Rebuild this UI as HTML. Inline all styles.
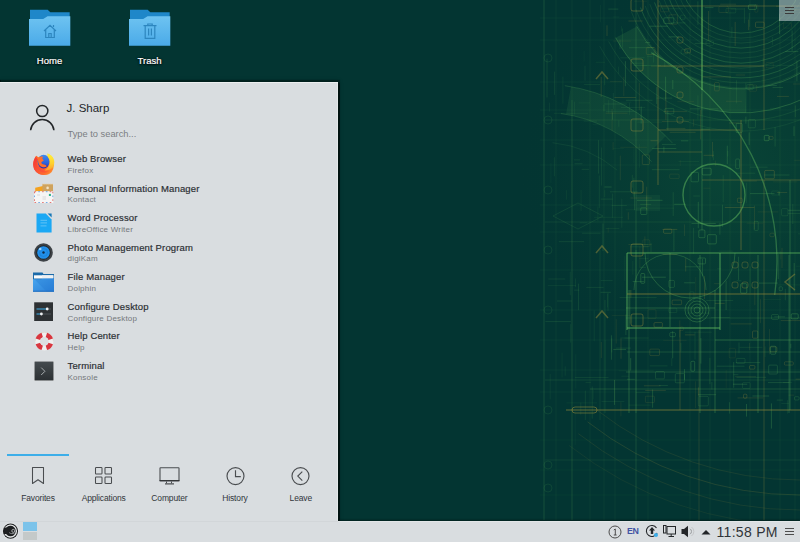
<!DOCTYPE html>
<html><head><meta charset="utf-8">
<style>
*{margin:0;padding:0;box-sizing:border-box}
html,body{width:800px;height:542px;overflow:hidden;background:#033532;font-family:"Liberation Sans",sans-serif}
svg{position:absolute;overflow:visible}
#wall{position:absolute;left:0;top:0;width:800px;height:520px}
.dlabel{position:absolute;color:#fff;-webkit-text-stroke:.2px #fff;font-size:9.5px;line-height:1;text-shadow:0 0 2px #000,0 1px 2px #000;text-align:center;width:80px;white-space:nowrap}
#menu{position:absolute;left:0;top:82px;width:338px;height:439px;background:#d9dde0;box-shadow:0 -.5px 1px 1.5px rgba(0,0,0,.6),0 0 4px 1px rgba(0,0,0,.25),inset 0 1px 0 #eceeef,inset -1px 0 0 #e4e7e9}
.t{position:absolute;white-space:nowrap;line-height:1}
.title{font-size:9.5px;letter-spacing:.15px;color:#2a2e32;-webkit-text-stroke:.18px #2a2e32}
.sub{font-size:8px;letter-spacing:.2px;color:#73777a}
.tab{position:absolute;top:0;width:66px;text-align:center;font-size:8.5px;letter-spacing:-.15px;color:#31363b}
#taskbar{position:absolute;left:0;top:521px;width:800px;height:21px;background:#d9dde0;border-top:1px solid #e3e6e8}
#tbshadow{position:absolute;left:339px;top:521px;width:461px;height:1px;box-shadow:0 -1px 2px 0 rgba(0,0,0,.6)}
</style></head><body>
<svg id="wall" width="800" height="520" viewBox="0 0 800 520">
  <defs>
    <radialGradient id="glow" cx="725" cy="170" r="210" gradientUnits="userSpaceOnUse">
      <stop offset="0" stop-color="#1a6a40" stop-opacity=".3"/>
      <stop offset=".6" stop-color="#125438" stop-opacity=".16"/>
      <stop offset="1" stop-color="#023430" stop-opacity="0"/>
    </radialGradient>
  </defs>
  <rect width="800" height="520" fill="#033532"/>
  <rect width="800" height="520" fill="url(#glow)"/>
  <g fill="none">
<path d="M746.0 112.9A142 142 0 0 1 615.6 37.7L636.8 26.4A118 118 0 0 0 745.1 88.9Z" fill="#62bb5e" fill-opacity="0.12"/>
<path d="M803.0 -29.0A62 62 0 0 1 682.7 -7.8" fill="none" stroke="#62bb5e" stroke-opacity="0.24" stroke-width="1"/>
<path d="M808.0 -29.0A67 67 0 0 1 678.0 -6.1" fill="none" stroke="#62bb5e" stroke-opacity="0.13" stroke-width="1"/>
<path d="M813.0 -29.0A72 72 0 0 1 673.3 -4.4" fill="none" stroke="#62bb5e" stroke-opacity="0.13" stroke-width="1"/>
<path d="M818.0 -29.0A77 77 0 0 1 668.6 -2.7" fill="none" stroke="#62bb5e" stroke-opacity="0.24" stroke-width="1"/>
<path d="M823.0 -29.0A82 82 0 0 1 663.9 -1.0" fill="none" stroke="#62bb5e" stroke-opacity="0.13" stroke-width="1"/>
<path d="M828.0 -29.0A87 87 0 0 1 659.2 0.8" fill="none" stroke="#62bb5e" stroke-opacity="0.13" stroke-width="1"/>
<path d="M833.0 -29.0A92 92 0 0 1 654.5 2.5" fill="none" stroke="#62bb5e" stroke-opacity="0.24" stroke-width="1"/>
<path d="M838.0 -29.0A97 97 0 0 1 649.8 4.2" fill="none" stroke="#62bb5e" stroke-opacity="0.13" stroke-width="1"/>
<path d="M843.0 -29.0A102 102 0 0 1 645.2 5.9" fill="none" stroke="#62bb5e" stroke-opacity="0.13" stroke-width="1"/>
<path d="M848.0 -29.0A107 107 0 0 1 640.5 7.6" fill="none" stroke="#62bb5e" stroke-opacity="0.24" stroke-width="1"/>
<path d="M853.0 -29.0A112 112 0 0 1 635.8 9.3" fill="none" stroke="#62bb5e" stroke-opacity="0.13" stroke-width="1"/>
<path d="M858.0 -29.0A117 117 0 0 1 631.1 11.0" fill="none" stroke="#62bb5e" stroke-opacity="0.13" stroke-width="1"/>
<path d="M851.9 11.4A118 118 0 0 1 636.8 26.4" fill="none" stroke="#62bb5e" stroke-opacity="0.3" stroke-width="1"/>
<path d="M874.4 19.6A142 142 0 0 1 615.6 37.7" fill="none" stroke="#62bb5e" stroke-opacity="0.3" stroke-width="1"/>
<path d="M882.0 22.3A150 150 0 0 1 608.6 41.4" fill="none" stroke="#62bb5e" stroke-opacity="0.12" stroke-width="1"/>
<path d="M891.4 25.7A160 160 0 0 1 599.7 46.1" fill="none" stroke="#62bb5e" stroke-opacity="0.1" stroke-width="1"/>
<path d="M570.9 86.7A178 178 0 0 1 665.9 136.1L646.1 155.9A150 150 0 0 0 566.0 114.3Z" fill="#62bb5e" fill-opacity="0.1"/>
<path d="M560.9 113.5A150 150 0 0 1 651.5 161.6" fill="none" stroke="#62bb5e" stroke-opacity="0.2" stroke-width="1"/>
<path d="M564.8 85.7A178 178 0 0 1 672.3 142.9" fill="none" stroke="#62bb5e" stroke-opacity="0.2" stroke-width="1"/>
<path d="M552.5 142.7A120 120 0 0 1 617.1 170.1" fill="none" stroke="#62bb5e" stroke-opacity="0.1" stroke-width="1"/>
<path d="M664.8 61.1L664.8 67.0" stroke="#62bb5e" stroke-opacity="0.14" stroke-width="1"/>
<path d="M611.6 205.5L626.9 205.5" stroke="#62bb5e" stroke-opacity="0.1" stroke-width="1"/>
<path d="M684.9 334.9L694.7 334.9" stroke="#948a3a" stroke-opacity="0.24" stroke-width="1"/>
<path d="M715.4 160.7L715.4 165.9" stroke="#948a3a" stroke-opacity="0.13" stroke-width="1"/>
<path d="M628.9 47.7L654.1 47.7" stroke="#62bb5e" stroke-opacity="0.18" stroke-width="1"/>
<path d="M727.8 150.8L727.8 156.5" stroke="#62bb5e" stroke-opacity="0.12" stroke-width="1"/>
<path d="M736.1 173.2L755.3 173.2" stroke="#62bb5e" stroke-opacity="0.13" stroke-width="1"/>
<path d="M758.9 283.1L777.8 283.1" stroke="#62bb5e" stroke-opacity="0.23" stroke-width="1"/>
<path d="M745.9 116.6L745.9 123.7" stroke="#62bb5e" stroke-opacity="0.21" stroke-width="1"/>
<path d="M630.4 198.0L651.8 198.0" stroke="#948a3a" stroke-opacity="0.18" stroke-width="1"/>
<path d="M775.1 127.1L775.1 146.5" stroke="#62bb5e" stroke-opacity="0.16" stroke-width="1"/>
<path d="M768.0 382.6L789.3 382.6" stroke="#62bb5e" stroke-opacity="0.2" stroke-width="1"/>
<path d="M729.4 402.2L729.4 413.6" stroke="#62bb5e" stroke-opacity="0.19" stroke-width="1"/>
<path d="M604.5 187.0L611.6 187.0" stroke="#62bb5e" stroke-opacity="0.21" stroke-width="1"/>
<path d="M625.9 100.3L652.5 100.3" stroke="#62bb5e" stroke-opacity="0.16" stroke-width="1"/>
<path d="M709.9 357.8L709.9 384.2" stroke="#62bb5e" stroke-opacity="0.15" stroke-width="1"/>
<path d="M671.8 358.1L671.8 366.0" stroke="#62bb5e" stroke-opacity="0.12" stroke-width="1"/>
<path d="M646.7 196.4L646.7 207.2" stroke="#62bb5e" stroke-opacity="0.15" stroke-width="1"/>
<path d="M673.9 229.4L673.9 251.3" stroke="#62bb5e" stroke-opacity="0.18" stroke-width="1"/>
<path d="M735.2 21.9L735.2 46.1" stroke="#948a3a" stroke-opacity="0.22" stroke-width="1"/>
<path d="M678.5 161.6L699.0 161.6" stroke="#62bb5e" stroke-opacity="0.09" stroke-width="1"/>
<path d="M641.8 65.7L647.1 65.7" stroke="#62bb5e" stroke-opacity="0.11" stroke-width="1"/>
<path d="M620.3 147.3L647.0 147.3" stroke="#948a3a" stroke-opacity="0.11" stroke-width="1"/>
<path d="M650.5 140.7L657.6 140.7" stroke="#948a3a" stroke-opacity="0.25" stroke-width="1"/>
<path d="M693.2 196.0L699.9 196.0" stroke="#62bb5e" stroke-opacity="0.13" stroke-width="1"/>
<path d="M765.8 65.4L794.5 65.4" stroke="#62bb5e" stroke-opacity="0.1" stroke-width="1"/>
<path d="M708.6 11.0L708.6 40.4" stroke="#948a3a" stroke-opacity="0.2" stroke-width="1"/>
<path d="M652.2 148.5L676.3 148.5" stroke="#62bb5e" stroke-opacity="0.21" stroke-width="1"/>
<path d="M665.9 90.3L665.9 119.9" stroke="#948a3a" stroke-opacity="0.22" stroke-width="1"/>
<path d="M763.7 299.6L781.1 299.6" stroke="#62bb5e" stroke-opacity="0.08" stroke-width="1"/>
<path d="M605.6 113.2L627.6 113.2" stroke="#948a3a" stroke-opacity="0.16" stroke-width="1"/>
<path d="M787.4 400.2L787.4 413.6" stroke="#62bb5e" stroke-opacity="0.12" stroke-width="1"/>
<path d="M639.3 82.8L639.3 110.2" stroke="#948a3a" stroke-opacity="0.16" stroke-width="1"/>
<path d="M730.6 323.9L751.8 323.9" stroke="#948a3a" stroke-opacity="0.21" stroke-width="1"/>
<path d="M750.0 193.6L774.5 193.6" stroke="#62bb5e" stroke-opacity="0.22" stroke-width="1"/>
<path d="M794.3 160.3L822.9 160.3" stroke="#948a3a" stroke-opacity="0.11" stroke-width="1"/>
<path d="M625.4 61.2L625.4 86.2" stroke="#62bb5e" stroke-opacity="0.22" stroke-width="1"/>
<path d="M796.1 266.2L814.3 266.2" stroke="#62bb5e" stroke-opacity="0.08" stroke-width="1"/>
<path d="M794.2 263.1L794.2 291.4" stroke="#62bb5e" stroke-opacity="0.23" stroke-width="1"/>
<path d="M765.2 85.5L776.8 85.5" stroke="#62bb5e" stroke-opacity="0.18" stroke-width="1"/>
<path d="M651.9 169.7L679.5 169.7" stroke="#62bb5e" stroke-opacity="0.16" stroke-width="1"/>
<path d="M716.7 366.2L744.5 366.2" stroke="#62bb5e" stroke-opacity="0.17" stroke-width="1"/>
<path d="M704.7 7.6L713.5 7.6" stroke="#62bb5e" stroke-opacity="0.22" stroke-width="1"/>
<path d="M634.5 191.8L634.5 210.2" stroke="#62bb5e" stroke-opacity="0.17" stroke-width="1"/>
<path d="M711.1 317.6L729.7 317.6" stroke="#62bb5e" stroke-opacity="0.13" stroke-width="1"/>
<path d="M754.5 205.6L754.5 229.4" stroke="#948a3a" stroke-opacity="0.16" stroke-width="1"/>
<path d="M722.5 204.7L722.5 226.8" stroke="#62bb5e" stroke-opacity="0.17" stroke-width="1"/>
<path d="M695.6 381.3L695.6 408.1" stroke="#948a3a" stroke-opacity="0.12" stroke-width="1"/>
<path d="M711.9 382.0L711.9 389.6" stroke="#62bb5e" stroke-opacity="0.16" stroke-width="1"/>
<path d="M614.5 97.5L635.9 97.5" stroke="#948a3a" stroke-opacity="0.23" stroke-width="1"/>
<path d="M630.9 290.0L630.9 297.7" stroke="#948a3a" stroke-opacity="0.24" stroke-width="1"/>
<path d="M643.9 385.8L660.6 385.8" stroke="#948a3a" stroke-opacity="0.22" stroke-width="1"/>
<path d="M632.3 174.8L632.3 187.6" stroke="#62bb5e" stroke-opacity="0.13" stroke-width="1"/>
<path d="M744.4 7.9L744.4 23.3" stroke="#62bb5e" stroke-opacity="0.14" stroke-width="1"/>
<path d="M724.8 207.5L754.4 207.5" stroke="#948a3a" stroke-opacity="0.25" stroke-width="1"/>
<path d="M621.0 107.6L645.2 107.6" stroke="#62bb5e" stroke-opacity="0.1" stroke-width="1"/>
<path d="M684.5 369.1L684.5 379.8" stroke="#62bb5e" stroke-opacity="0.24" stroke-width="1"/>
<path d="M714.1 283.7L719.6 283.7" stroke="#948a3a" stroke-opacity="0.15" stroke-width="1"/>
<path d="M614.5 380.0L614.5 404.9" stroke="#62bb5e" stroke-opacity="0.23" stroke-width="1"/>
<path d="M613.3 349.4L626.1 349.4" stroke="#62bb5e" stroke-opacity="0.24" stroke-width="1"/>
<path d="M653.6 52.3L653.6 62.5" stroke="#62bb5e" stroke-opacity="0.11" stroke-width="1"/>
<path d="M610.1 81.7L622.0 81.7" stroke="#948a3a" stroke-opacity="0.13" stroke-width="1"/>
<path d="M700.0 72.0L704.5 72.0" stroke="#62bb5e" stroke-opacity="0.08" stroke-width="1"/>
<path d="M746.6 223.2L763.0 223.2" stroke="#948a3a" stroke-opacity="0.1" stroke-width="1"/>
<path d="M763.8 175.0L789.5 175.0" stroke="#62bb5e" stroke-opacity="0.17" stroke-width="1"/>
<path d="M737.5 397.9L763.2 397.9" stroke="#948a3a" stroke-opacity="0.19" stroke-width="1"/>
<path d="M680.9 140.8L688.3 140.8" stroke="#62bb5e" stroke-opacity="0.21" stroke-width="1"/>
<path d="M651.1 66.1L677.0 66.1" stroke="#948a3a" stroke-opacity="0.19" stroke-width="1"/>
<path d="M656.4 98.1L672.3 98.1" stroke="#62bb5e" stroke-opacity="0.16" stroke-width="1"/>
<path d="M652.6 389.5L652.6 407.7" stroke="#62bb5e" stroke-opacity="0.24" stroke-width="1"/>
<path d="M661.9 144.4L675.8 144.4" stroke="#62bb5e" stroke-opacity="0.17" stroke-width="1"/>
<path d="M640.2 204.4L651.1 204.4" stroke="#62bb5e" stroke-opacity="0.15" stroke-width="1"/>
<path d="M608.3 9.1L618.4 9.1" stroke="#62bb5e" stroke-opacity="0.17" stroke-width="1"/>
<path d="M750.1 266.3L750.1 293.2" stroke="#62bb5e" stroke-opacity="0.14" stroke-width="1"/>
<path d="M796.9 60.5L796.9 81.3" stroke="#62bb5e" stroke-opacity="0.22" stroke-width="1"/>
<path d="M778.4 254.1L778.4 279.2" stroke="#62bb5e" stroke-opacity="0.17" stroke-width="1"/>
<path d="M700.9 338.1L700.9 363.6" stroke="#62bb5e" stroke-opacity="0.23" stroke-width="1"/>
<path d="M736.6 280.8L741.4 280.8" stroke="#62bb5e" stroke-opacity="0.14" stroke-width="1"/>
<path d="M621.0 338.5L621.0 358.8" stroke="#948a3a" stroke-opacity="0.2" stroke-width="1"/>
<path d="M697.9 1.3L697.9 24.8" stroke="#62bb5e" stroke-opacity="0.17" stroke-width="1"/>
<path d="M731.9 26.8L731.9 37.3" stroke="#62bb5e" stroke-opacity="0.13" stroke-width="1"/>
<path d="M745.9 83.1L745.9 112.5" stroke="#62bb5e" stroke-opacity="0.15" stroke-width="1"/>
<path d="M695.8 276.9L695.8 296.9" stroke="#948a3a" stroke-opacity="0.09" stroke-width="1"/>
<path d="M629.5 102.8L629.5 114.8" stroke="#62bb5e" stroke-opacity="0.08" stroke-width="1"/>
<path d="M612.1 108.9L612.1 130.8" stroke="#948a3a" stroke-opacity="0.13" stroke-width="1"/>
<path d="M703.3 188.2L710.4 188.2" stroke="#948a3a" stroke-opacity="0.11" stroke-width="1"/>
<path d="M795.6 379.2L811.6 379.2" stroke="#948a3a" stroke-opacity="0.24" stroke-width="1"/>
<path d="M689.9 108.8L718.5 108.8" stroke="#62bb5e" stroke-opacity="0.18" stroke-width="1"/>
<path d="M628.3 212.2L628.3 219.7" stroke="#948a3a" stroke-opacity="0.17" stroke-width="1"/>
<path d="M777.4 284.9L804.7 284.9" stroke="#62bb5e" stroke-opacity="0.08" stroke-width="1"/>
<path d="M600.7 199.1L612.6 199.1" stroke="#62bb5e" stroke-opacity="0.14" stroke-width="1"/>
<path d="M663.2 340.3L686.7 340.3" stroke="#948a3a" stroke-opacity="0.1" stroke-width="1"/>
<path d="M785.3 288.8L785.3 300.3" stroke="#62bb5e" stroke-opacity="0.15" stroke-width="1"/>
<path d="M799.8 238.6L814.9 238.6" stroke="#62bb5e" stroke-opacity="0.09" stroke-width="1"/>
<path d="M620.3 338.0L648.7 338.0" stroke="#62bb5e" stroke-opacity="0.13" stroke-width="1"/>
<path d="M702.2 76.9L731.1 76.9" stroke="#948a3a" stroke-opacity="0.22" stroke-width="1"/>
<path d="M726.2 369.9L726.2 388.2" stroke="#948a3a" stroke-opacity="0.09" stroke-width="1"/>
<path d="M746.5 182.6L746.5 203.4" stroke="#62bb5e" stroke-opacity="0.09" stroke-width="1"/>
<path d="M785.4 51.6L798.3 51.6" stroke="#62bb5e" stroke-opacity="0.21" stroke-width="1"/>
<path d="M795.3 105.4L795.3 117.2" stroke="#62bb5e" stroke-opacity="0.15" stroke-width="1"/>
<path d="M633.5 65.5L661.0 65.5" stroke="#62bb5e" stroke-opacity="0.12" stroke-width="1"/>
<path d="M781.3 403.6L788.9 403.6" stroke="#62bb5e" stroke-opacity="0.1" stroke-width="1"/>
<path d="M668.4 36.9L679.1 36.9" stroke="#62bb5e" stroke-opacity="0.23" stroke-width="1"/>
<path d="M749.9 167.2L767.6 167.2" stroke="#62bb5e" stroke-opacity="0.14" stroke-width="1"/>
<path d="M612.4 112.4L612.4 119.7" stroke="#62bb5e" stroke-opacity="0.19" stroke-width="1"/>
<path d="M772.6 87.5L783.0 87.5" stroke="#62bb5e" stroke-opacity="0.16" stroke-width="1"/>
<path d="M790.8 343.7L790.8 348.3" stroke="#62bb5e" stroke-opacity="0.2" stroke-width="1"/>
<path d="M779.1 191.7L779.1 195.7" stroke="#62bb5e" stroke-opacity="0.24" stroke-width="1"/>
<path d="M765.1 346.5L765.1 356.9" stroke="#62bb5e" stroke-opacity="0.11" stroke-width="1"/>
<path d="M704.5 276.2L704.5 299.0" stroke="#948a3a" stroke-opacity="0.21" stroke-width="1"/>
<path d="M691.5 223.4L715.8 223.4" stroke="#62bb5e" stroke-opacity="0.24" stroke-width="1"/>
<path d="M729.1 123.0L739.6 123.0" stroke="#948a3a" stroke-opacity="0.2" stroke-width="1"/>
<path d="M622.4 28.5L622.4 47.6" stroke="#62bb5e" stroke-opacity="0.12" stroke-width="1"/>
<path d="M720.2 4.2L736.2 4.2" stroke="#948a3a" stroke-opacity="0.19" stroke-width="1"/>
<path d="M776.8 192.5L787.2 192.5" stroke="#948a3a" stroke-opacity="0.2" stroke-width="1"/>
<path d="M661.5 8.8L683.0 8.8" stroke="#62bb5e" stroke-opacity="0.12" stroke-width="1"/>
<path d="M733.5 374.7L738.4 374.7" stroke="#62bb5e" stroke-opacity="0.15" stroke-width="1"/>
<path d="M736.5 80.2L736.5 103.4" stroke="#62bb5e" stroke-opacity="0.11" stroke-width="1"/>
<path d="M794.0 126.2L794.0 136.2" stroke="#62bb5e" stroke-opacity="0.21" stroke-width="1"/>
<path d="M659.0 385.5L667.9 385.5" stroke="#62bb5e" stroke-opacity="0.15" stroke-width="1"/>
<path d="M733.1 384.2L747.3 384.2" stroke="#62bb5e" stroke-opacity="0.25" stroke-width="1"/>
<path d="M628.4 21.0L642.6 21.0" stroke="#948a3a" stroke-opacity="0.23" stroke-width="1"/>
<path d="M746.5 404.0L746.5 416.6" stroke="#62bb5e" stroke-opacity="0.24" stroke-width="1"/>
<path d="M749.3 12.9L749.3 26.8" stroke="#62bb5e" stroke-opacity="0.14" stroke-width="1"/>
<path d="M633.9 1.2L647.0 1.2" stroke="#948a3a" stroke-opacity="0.1" stroke-width="1"/>
<path d="M792.9 84.0L818.2 84.0" stroke="#948a3a" stroke-opacity="0.15" stroke-width="1"/>
<path d="M609.9 191.8L637.8 191.8" stroke="#62bb5e" stroke-opacity="0.14" stroke-width="1"/>
<path d="M779.4 12.3L804.5 12.3" stroke="#948a3a" stroke-opacity="0.09" stroke-width="1"/>
<path d="M607.0 25.3L607.0 36.0" stroke="#948a3a" stroke-opacity="0.23" stroke-width="1"/>
<path d="M667.8 110.3L667.8 130.3" stroke="#62bb5e" stroke-opacity="0.2" stroke-width="1"/>
<path d="M663.3 111.6L686.9 111.6" stroke="#948a3a" stroke-opacity="0.19" stroke-width="1"/>
<path d="M788.7 9.8L805.0 9.8" stroke="#948a3a" stroke-opacity="0.24" stroke-width="1"/>
<path d="M677.3 101.7L694.1 101.7" stroke="#948a3a" stroke-opacity="0.11" stroke-width="1"/>
<path d="M760.5 299.1L760.5 323.2" stroke="#948a3a" stroke-opacity="0.14" stroke-width="1"/>
<path d="M663.9 146.6L663.9 152.6" stroke="#62bb5e" stroke-opacity="0.21" stroke-width="1"/>
<path d="M649.5 26.2L667.8 26.2" stroke="#62bb5e" stroke-opacity="0.25" stroke-width="1"/>
<path d="M776.7 400.1L782.9 400.1" stroke="#62bb5e" stroke-opacity="0.16" stroke-width="1"/>
<path d="M742.0 181.0L756.8 181.0" stroke="#948a3a" stroke-opacity="0.19" stroke-width="1"/>
<path d="M749.6 343.0L749.6 350.2" stroke="#948a3a" stroke-opacity="0.13" stroke-width="1"/>
<path d="M713.4 151.1L713.4 160.2" stroke="#62bb5e" stroke-opacity="0.12" stroke-width="1"/>
<path d="M630.7 358.1L630.7 370.6" stroke="#62bb5e" stroke-opacity="0.25" stroke-width="1"/>
<path d="M701.5 93.7L701.5 114.7" stroke="#948a3a" stroke-opacity="0.1" stroke-width="1"/>
<path d="M695.0 331.7L695.0 359.5" stroke="#62bb5e" stroke-opacity="0.13" stroke-width="1"/>
<path d="M623.8 76.8L623.8 95.9" stroke="#948a3a" stroke-opacity="0.14" stroke-width="1"/>
<path d="M773.2 181.9L797.4 181.9" stroke="#948a3a" stroke-opacity="0.1" stroke-width="1"/>
<path d="M719.2 251.1L732.8 251.1" stroke="#62bb5e" stroke-opacity="0.11" stroke-width="1"/>
<path d="M651.0 242.8L651.0 252.1" stroke="#62bb5e" stroke-opacity="0.14" stroke-width="1"/>
<path d="M735.7 75.0L745.0 75.0" stroke="#948a3a" stroke-opacity="0.17" stroke-width="1"/>
<path d="M612.7 41.1L631.0 41.1" stroke="#948a3a" stroke-opacity="0.1" stroke-width="1"/>
<path d="M632.7 281.6L644.1 281.6" stroke="#62bb5e" stroke-opacity="0.24" stroke-width="1"/>
<path d="M662.5 229.4L677.3 229.4" stroke="#948a3a" stroke-opacity="0.25" stroke-width="1"/>
<path d="M672.8 79.9L672.8 89.2" stroke="#62bb5e" stroke-opacity="0.23" stroke-width="1"/>
<path d="M684.8 332.2L711.7 332.2" stroke="#62bb5e" stroke-opacity="0.11" stroke-width="1"/>
<path d="M603.0 223.4L603.0 251.0" stroke="#62bb5e" stroke-opacity="0.19" stroke-width="1"/>
<path d="M674.2 204.3L685.5 204.3" stroke="#62bb5e" stroke-opacity="0.24" stroke-width="1"/>
<path d="M621.8 198.7L621.8 227.8" stroke="#62bb5e" stroke-opacity="0.1" stroke-width="1"/>
<path d="M788.6 395.1L794.0 395.1" stroke="#948a3a" stroke-opacity="0.15" stroke-width="1"/>
<path d="M780.8 251.2L780.8 259.4" stroke="#948a3a" stroke-opacity="0.12" stroke-width="1"/>
<path d="M680.9 342.8L680.9 351.5" stroke="#62bb5e" stroke-opacity="0.15" stroke-width="1"/>
<path d="M703.6 155.3L714.0 155.3" stroke="#948a3a" stroke-opacity="0.23" stroke-width="1"/>
<path d="M608.2 227.7L608.2 232.7" stroke="#948a3a" stroke-opacity="0.1" stroke-width="1"/>
<path d="M719.9 222.8L719.9 234.7" stroke="#62bb5e" stroke-opacity="0.18" stroke-width="1"/>
<path d="M685.1 266.8L700.5 266.8" stroke="#62bb5e" stroke-opacity="0.19" stroke-width="1"/>
<path d="M697.9 95.3L697.9 119.6" stroke="#62bb5e" stroke-opacity="0.11" stroke-width="1"/>
<path d="M694.6 43.4L709.8 43.4" stroke="#62bb5e" stroke-opacity="0.16" stroke-width="1"/>
<path d="M702.0 16.5L702.0 22.6" stroke="#948a3a" stroke-opacity="0.21" stroke-width="1"/>
<path d="M702.3 22.0L702.3 35.8" stroke="#948a3a" stroke-opacity="0.1" stroke-width="1"/>
<path d="M771.4 403.4L771.4 428.6" stroke="#62bb5e" stroke-opacity="0.25" stroke-width="1"/>
<path d="M698.4 387.4L698.4 395.7" stroke="#948a3a" stroke-opacity="0.24" stroke-width="1"/>
<path d="M613.1 142.1L613.1 150.2" stroke="#948a3a" stroke-opacity="0.13" stroke-width="1"/>
<path d="M763.1 58.1L763.1 86.1" stroke="#62bb5e" stroke-opacity="0.12" stroke-width="1"/>
<path d="M701.2 129.2L709.9 129.2" stroke="#62bb5e" stroke-opacity="0.24" stroke-width="1"/>
<path d="M735.9 362.6L760.3 362.6" stroke="#62bb5e" stroke-opacity="0.17" stroke-width="1"/>
<path d="M727.3 145.7L727.3 164.1" stroke="#62bb5e" stroke-opacity="0.23" stroke-width="1"/>
<path d="M620.9 402.1L620.9 416.4" stroke="#948a3a" stroke-opacity="0.13" stroke-width="1"/>
<path d="M798.1 233.8L822.0 233.8" stroke="#62bb5e" stroke-opacity="0.11" stroke-width="1"/>
<path d="M748.7 19.6L748.7 30.2" stroke="#948a3a" stroke-opacity="0.25" stroke-width="1"/>
<path d="M717.2 268.8L721.2 268.8" stroke="#62bb5e" stroke-opacity="0.11" stroke-width="1"/>
<path d="M723.2 175.1L723.2 202.3" stroke="#62bb5e" stroke-opacity="0.12" stroke-width="1"/>
<path d="M730.6 9.0L743.9 9.0" stroke="#62bb5e" stroke-opacity="0.14" stroke-width="1"/>
<path d="M644.9 236.4L644.9 245.7" stroke="#948a3a" stroke-opacity="0.16" stroke-width="1"/>
<path d="M626.9 379.3L634.8 379.3" stroke="#62bb5e" stroke-opacity="0.19" stroke-width="1"/>
<path d="M774.3 316.8L785.1 316.8" stroke="#62bb5e" stroke-opacity="0.19" stroke-width="1"/>
<path d="M712.5 141.9L712.5 157.4" stroke="#948a3a" stroke-opacity="0.2" stroke-width="1"/>
<path d="M649.7 365.9L667.5 365.9" stroke="#62bb5e" stroke-opacity="0.12" stroke-width="1"/>
<path d="M611.7 315.4L630.0 315.4" stroke="#948a3a" stroke-opacity="0.1" stroke-width="1"/>
<path d="M639.9 246.3L639.9 267.0" stroke="#948a3a" stroke-opacity="0.11" stroke-width="1"/>
<path d="M661.9 121.6L689.0 121.6" stroke="#948a3a" stroke-opacity="0.2" stroke-width="1"/>
<path d="M601.3 342.0L601.3 358.1" stroke="#948a3a" stroke-opacity="0.16" stroke-width="1"/>
<path d="M645.2 42.6L650.2 42.6" stroke="#62bb5e" stroke-opacity="0.21" stroke-width="1"/>
<path d="M739.0 342.4L739.0 353.3" stroke="#62bb5e" stroke-opacity="0.15" stroke-width="1"/>
<path d="M757.7 211.9L778.4 211.9" stroke="#948a3a" stroke-opacity="0.12" stroke-width="1"/>
<path d="M776.0 6.2L786.1 6.2" stroke="#948a3a" stroke-opacity="0.24" stroke-width="1"/>
<path d="M749.2 132.4L749.2 144.9" stroke="#62bb5e" stroke-opacity="0.23" stroke-width="1"/>
<path d="M726.1 280.6L726.1 310.1" stroke="#62bb5e" stroke-opacity="0.22" stroke-width="1"/>
<path d="M739.5 347.3L762.4 347.3" stroke="#62bb5e" stroke-opacity="0.13" stroke-width="1"/>
<path d="M642.4 252.2L670.1 252.2" stroke="#62bb5e" stroke-opacity="0.08" stroke-width="1"/>
<path d="M621.3 376.2L629.0 376.2" stroke="#62bb5e" stroke-opacity="0.09" stroke-width="1"/>
<path d="M738.5 256.7L738.5 279.9" stroke="#62bb5e" stroke-opacity="0.18" stroke-width="1"/>
<path d="M672.7 331.1L672.7 358.3" stroke="#62bb5e" stroke-opacity="0.23" stroke-width="1"/>
<path d="M782.9 382.5L792.2 382.5" stroke="#62bb5e" stroke-opacity="0.09" stroke-width="1"/>
<path d="M769.5 328.9L769.5 354.3" stroke="#948a3a" stroke-opacity="0.13" stroke-width="1"/>
<path d="M620.0 39.6L620.0 49.0" stroke="#62bb5e" stroke-opacity="0.15" stroke-width="1"/>
<path d="M604.2 104.0L626.8 104.0" stroke="#62bb5e" stroke-opacity="0.13" stroke-width="1"/>
<path d="M792.8 204.0L792.8 224.1" stroke="#62bb5e" stroke-opacity="0.15" stroke-width="1"/>
<path d="M687.3 313.1L709.6 313.1" stroke="#62bb5e" stroke-opacity="0.12" stroke-width="1"/>
<path d="M772.4 36.8L772.4 45.2" stroke="#62bb5e" stroke-opacity="0.11" stroke-width="1"/>
<path d="M752.4 396.0L769.2 396.0" stroke="#62bb5e" stroke-opacity="0.22" stroke-width="1"/>
<path d="M636.9 200.3L662.5 200.3" stroke="#62bb5e" stroke-opacity="0.24" stroke-width="1"/>
<path d="M656.7 87.0L656.7 103.9" stroke="#62bb5e" stroke-opacity="0.19" stroke-width="1"/>
<path d="M616.2 319.1L616.2 343.6" stroke="#948a3a" stroke-opacity="0.14" stroke-width="1"/>
<path d="M680.3 159.8L680.3 166.1" stroke="#948a3a" stroke-opacity="0.08" stroke-width="1"/>
<path d="M641.2 106.6L641.2 123.6" stroke="#62bb5e" stroke-opacity="0.23" stroke-width="1"/>
<path d="M646.7 186.7L646.7 210.3" stroke="#948a3a" stroke-opacity="0.19" stroke-width="1"/>
<path d="M669.7 132.3L695.6 132.3" stroke="#948a3a" stroke-opacity="0.21" stroke-width="1"/>
<path d="M633.9 177.7L633.9 196.8" stroke="#62bb5e" stroke-opacity="0.16" stroke-width="1"/>
<path d="M777.0 96.4L788.9 96.4" stroke="#948a3a" stroke-opacity="0.22" stroke-width="1"/>
<path d="M630.9 63.2L643.4 63.2" stroke="#62bb5e" stroke-opacity="0.11" stroke-width="1"/>
<path d="M665.6 76.7L665.6 99.6" stroke="#62bb5e" stroke-opacity="0.24" stroke-width="1"/>
<path d="M620.3 155.6L620.3 180.3" stroke="#948a3a" stroke-opacity="0.15" stroke-width="1"/>
<path d="M639.2 258.4L648.6 258.4" stroke="#62bb5e" stroke-opacity="0.09" stroke-width="1"/>
<path d="M679.8 320.4L679.8 337.4" stroke="#948a3a" stroke-opacity="0.16" stroke-width="1"/>
<path d="M628.4 244.5L651.6 244.5" stroke="#948a3a" stroke-opacity="0.15" stroke-width="1"/>
<path d="M714.8 303.4L724.7 303.4" stroke="#948a3a" stroke-opacity="0.23" stroke-width="1"/>
<path d="M754.8 283.5L754.8 305.2" stroke="#948a3a" stroke-opacity="0.16" stroke-width="1"/>
<path d="M662.6 254.5L677.5 254.5" stroke="#948a3a" stroke-opacity="0.2" stroke-width="1"/>
<path d="M725.9 101.3L741.8 101.3" stroke="#948a3a" stroke-opacity="0.15" stroke-width="1"/>
<path d="M735.0 376.7L756.1 376.7" stroke="#948a3a" stroke-opacity="0.15" stroke-width="1"/>
<path d="M698.0 394.7L716.1 394.7" stroke="#62bb5e" stroke-opacity="0.21" stroke-width="1"/>
<path d="M788.1 210.3L807.1 210.3" stroke="#62bb5e" stroke-opacity="0.2" stroke-width="1"/>
<path d="M702.4 258.9L702.4 276.5" stroke="#62bb5e" stroke-opacity="0.24" stroke-width="1"/>
<path d="M642.0 277.2L665.8 277.2" stroke="#62bb5e" stroke-opacity="0.25" stroke-width="1"/>
<path d="M671.1 22.9L685.5 22.9" stroke="#62bb5e" stroke-opacity="0.15" stroke-width="1"/>
<path d="M684.1 282.8L695.0 282.8" stroke="#62bb5e" stroke-opacity="0.21" stroke-width="1"/>
<path d="M788.0 213.5L812.8 213.5" stroke="#62bb5e" stroke-opacity="0.12" stroke-width="1"/>
<path d="M625.9 314.5L625.9 335.0" stroke="#62bb5e" stroke-opacity="0.18" stroke-width="1"/>
<path d="M645.2 390.4L665.8 390.4" stroke="#948a3a" stroke-opacity="0.22" stroke-width="1"/>
<path d="M693.6 119.2L693.6 126.5" stroke="#948a3a" stroke-opacity="0.14" stroke-width="1"/>
<path d="M770.1 108.3L780.7 108.3" stroke="#62bb5e" stroke-opacity="0.11" stroke-width="1"/>
<path d="M600.5 292.3L610.9 292.3" stroke="#62bb5e" stroke-opacity="0.16" stroke-width="1"/>
<path d="M685.7 258.1L685.7 271.5" stroke="#948a3a" stroke-opacity="0.23" stroke-width="1"/>
<path d="M611.4 335.3L611.4 359.7" stroke="#62bb5e" stroke-opacity="0.22" stroke-width="1"/>
<path d="M726.6 6.1L755.4 6.1" stroke="#948a3a" stroke-opacity="0.12" stroke-width="1"/>
<path d="M620.3 57.8L644.5 57.8" stroke="#62bb5e" stroke-opacity="0.11" stroke-width="1"/>
<path d="M780.8 320.6L808.0 320.6" stroke="#948a3a" stroke-opacity="0.21" stroke-width="1"/>
<path d="M733.7 362.0L733.7 387.8" stroke="#62bb5e" stroke-opacity="0.2" stroke-width="1"/>
<path d="M706.2 300.5L733.1 300.5" stroke="#62bb5e" stroke-opacity="0.12" stroke-width="1"/>
<path d="M646.8 56.4L652.4 56.4" stroke="#62bb5e" stroke-opacity="0.1" stroke-width="1"/>
<path d="M698.3 201.8L698.3 228.2" stroke="#62bb5e" stroke-opacity="0.22" stroke-width="1"/>
<path d="M693.6 227.8L693.6 253.7" stroke="#62bb5e" stroke-opacity="0.15" stroke-width="1"/>
<path d="M792.1 30.5L792.1 51.1" stroke="#62bb5e" stroke-opacity="0.18" stroke-width="1"/>
<path d="M736.5 377.3L766.0 377.3" stroke="#62bb5e" stroke-opacity="0.16" stroke-width="1"/>
<path d="M779.5 13.7L779.5 34.0" stroke="#62bb5e" stroke-opacity="0.23" stroke-width="1"/>
<path d="M673.2 192.2L673.2 216.2" stroke="#62bb5e" stroke-opacity="0.15" stroke-width="1"/>
<path d="M684.5 224.4L684.5 236.0" stroke="#948a3a" stroke-opacity="0.15" stroke-width="1"/>
<path d="M700.7 110.0L700.7 139.4" stroke="#948a3a" stroke-opacity="0.21" stroke-width="1"/>
<path d="M666.2 128.4L685.4 128.4" stroke="#948a3a" stroke-opacity="0.21" stroke-width="1"/>
<path d="M608.0 292.7L608.0 310.9" stroke="#62bb5e" stroke-opacity="0.13" stroke-width="1"/>
<path d="M601.2 76.9L601.2 96.8" stroke="#948a3a" stroke-opacity="0.21" stroke-width="1"/>
<path d="M782.0 247.8L782.0 268.1" stroke="#948a3a" stroke-opacity="0.18" stroke-width="1"/>
<rect x="749.0" y="85.0" width="7.7" height="6.2" rx="1" fill="none" stroke="#948a3a" stroke-opacity="0.12"/>
<rect x="669.0" y="14.8" width="8.4" height="9.4" rx="1" fill="none" stroke="#948a3a" stroke-opacity="0.17"/>
<rect x="771.6" y="314.6" width="6.9" height="4.8" rx="1" fill="none" stroke="#62bb5e" stroke-opacity="0.18"/>
<rect x="691.0" y="172.3" width="7.5" height="9.5" rx="1" fill="none" stroke="#62bb5e" stroke-opacity="0.21"/>
<rect x="646.3" y="47.5" width="8.7" height="7.0" rx="1" fill="none" stroke="#948a3a" stroke-opacity="0.19"/>
<rect x="642.3" y="154.9" width="7.1" height="9.6" rx="1" fill="none" stroke="#948a3a" stroke-opacity="0.20"/>
<rect x="706.0" y="40.8" width="7.5" height="4.5" rx="1" fill="none" stroke="#62bb5e" stroke-opacity="0.10"/>
<rect x="640.8" y="273.5" width="3.9" height="9.8" rx="1" fill="none" stroke="#62bb5e" stroke-opacity="0.27"/>
<rect x="660.6" y="7.1" width="8.0" height="4.7" rx="1" fill="none" stroke="#948a3a" stroke-opacity="0.14"/>
<rect x="648.0" y="309.6" width="8.0" height="9.0" rx="1" fill="none" stroke="#948a3a" stroke-opacity="0.12"/>
<rect x="740.6" y="283.7" width="6.2" height="9.5" rx="1" fill="none" stroke="#62bb5e" stroke-opacity="0.29"/>
<rect x="754.8" y="4.6" width="3.1" height="7.6" rx="1" fill="none" stroke="#948a3a" stroke-opacity="0.12"/>
<rect x="689.8" y="291.8" width="4.2" height="9.0" rx="1" fill="none" stroke="#62bb5e" stroke-opacity="0.11"/>
<rect x="698.8" y="230.0" width="6.1" height="7.7" rx="1" fill="none" stroke="#62bb5e" stroke-opacity="0.26"/>
<rect x="698.1" y="258.0" width="7.4" height="5.9" rx="1" fill="none" stroke="#62bb5e" stroke-opacity="0.26"/>
<rect x="791.2" y="313.8" width="7.0" height="5.0" rx="1" fill="none" stroke="#62bb5e" stroke-opacity="0.29"/>
<rect x="752.5" y="331.0" width="5.3" height="7.2" rx="1" fill="none" stroke="#948a3a" stroke-opacity="0.27"/>
<rect x="736.2" y="123.4" width="6.0" height="9.2" rx="1" fill="none" stroke="#62bb5e" stroke-opacity="0.24"/>
<rect x="736.3" y="358.4" width="8.7" height="5.0" rx="1" fill="none" stroke="#62bb5e" stroke-opacity="0.15"/>
<rect x="707.6" y="234.7" width="8.7" height="9.2" rx="1" fill="none" stroke="#62bb5e" stroke-opacity="0.27"/>
<rect x="769.9" y="346.9" width="7.0" height="4.9" rx="1" fill="none" stroke="#948a3a" stroke-opacity="0.26"/>
<rect x="749.5" y="365.5" width="5.4" height="3.6" rx="1" fill="none" stroke="#948a3a" stroke-opacity="0.26"/>
<rect x="672.1" y="300.1" width="9.5" height="4.6" rx="1" fill="none" stroke="#948a3a" stroke-opacity="0.24"/>
<rect x="714.5" y="82.6" width="4.8" height="8.3" rx="1" fill="none" stroke="#948a3a" stroke-opacity="0.19"/>
<rect x="654.0" y="322.6" width="8.4" height="4.6" rx="1" fill="none" stroke="#948a3a" stroke-opacity="0.28"/>
<rect x="781.6" y="208.7" width="6.3" height="7.1" rx="1" fill="none" stroke="#62bb5e" stroke-opacity="0.14"/>
<rect x="668.9" y="280.4" width="5.5" height="7.0" rx="1" fill="none" stroke="#62bb5e" stroke-opacity="0.20"/>
<rect x="663.8" y="17.8" width="10.0" height="5.6" rx="1" fill="none" stroke="#62bb5e" stroke-opacity="0.23"/>
<rect x="766.0" y="62.5" width="7.2" height="5.4" rx="1" fill="none" stroke="#948a3a" stroke-opacity="0.10"/>
<rect x="645.4" y="396.2" width="9.1" height="6.4" rx="1" fill="none" stroke="#948a3a" stroke-opacity="0.15"/>
<rect x="764.7" y="170.4" width="9.6" height="8.4" rx="1" fill="none" stroke="#948a3a" stroke-opacity="0.29"/>
<rect x="680.6" y="15.1" width="4.4" height="4.3" rx="1" fill="none" stroke="#62bb5e" stroke-opacity="0.11"/>
<rect x="729.2" y="348.3" width="6.2" height="9.6" rx="1" fill="none" stroke="#948a3a" stroke-opacity="0.11"/>
<rect x="735.7" y="159.0" width="3.8" height="9.7" rx="1" fill="none" stroke="#62bb5e" stroke-opacity="0.21"/>
<rect x="742.5" y="382.6" width="7.7" height="5.8" rx="1" fill="none" stroke="#62bb5e" stroke-opacity="0.13"/>
<rect x="794.5" y="396.7" width="4.6" height="3.3" rx="1" fill="none" stroke="#62bb5e" stroke-opacity="0.17"/>
<rect x="784.4" y="361.8" width="8.9" height="3.3" rx="1" fill="none" stroke="#948a3a" stroke-opacity="0.24"/>
<rect x="743.5" y="394.2" width="3.4" height="4.0" rx="1" fill="none" stroke="#948a3a" stroke-opacity="0.29"/>
<rect x="748.3" y="119.5" width="7.1" height="8.3" rx="1" fill="none" stroke="#62bb5e" stroke-opacity="0.16"/>
<rect x="681.1" y="49.7" width="6.4" height="4.2" rx="1" fill="none" stroke="#62bb5e" stroke-opacity="0.13"/>
<rect x="748.4" y="5.0" width="8.0" height="4.4" rx="1" fill="none" stroke="#62bb5e" stroke-opacity="0.29"/>
<rect x="675.3" y="373.6" width="9.1" height="9.2" rx="1" fill="none" stroke="#62bb5e" stroke-opacity="0.19"/>
<rect x="655.5" y="371.5" width="8.9" height="7.4" rx="1" fill="none" stroke="#62bb5e" stroke-opacity="0.17"/>
<rect x="771.7" y="191.0" width="7.4" height="4.0" rx="1" fill="none" stroke="#62bb5e" stroke-opacity="0.11"/>
<rect x="754.2" y="221.3" width="4.0" height="9.1" rx="1" fill="none" stroke="#62bb5e" stroke-opacity="0.18"/>
<rect x="664.9" y="108.4" width="8.9" height="5.3" rx="1" fill="none" stroke="#62bb5e" stroke-opacity="0.20"/>
<rect x="690.9" y="361.3" width="3.8" height="9.9" rx="1" fill="none" stroke="#62bb5e" stroke-opacity="0.28"/>
<rect x="746.9" y="84.5" width="6.3" height="5.0" rx="1" fill="none" stroke="#62bb5e" stroke-opacity="0.14"/>
<rect x="698.3" y="396.4" width="10.0" height="9.5" rx="1" fill="none" stroke="#62bb5e" stroke-opacity="0.16"/>
<rect x="783.4" y="23.0" width="8.1" height="5.1" rx="1" fill="none" stroke="#948a3a" stroke-opacity="0.10"/>
<rect x="769.1" y="136.4" width="4.0" height="3.0" rx="1" fill="none" stroke="#948a3a" stroke-opacity="0.21"/>
<rect x="669.7" y="174.1" width="9.4" height="4.5" rx="1" fill="none" stroke="#948a3a" stroke-opacity="0.13"/>
<rect x="668.8" y="308.2" width="8.0" height="4.4" rx="1" fill="none" stroke="#62bb5e" stroke-opacity="0.12"/>
<rect x="737.4" y="198.2" width="4.9" height="4.4" rx="1" fill="none" stroke="#948a3a" stroke-opacity="0.24"/>
<rect x="769.9" y="233.2" width="4.4" height="3.5" rx="1" fill="none" stroke="#948a3a" stroke-opacity="0.18"/>
<rect x="755.5" y="22.1" width="8.7" height="5.3" rx="1" fill="none" stroke="#948a3a" stroke-opacity="0.27"/>
<rect x="718.9" y="6.2" width="9.4" height="6.3" rx="1" fill="none" stroke="#948a3a" stroke-opacity="0.15"/>
<rect x="669.8" y="332.6" width="5.6" height="4.1" rx="1" fill="none" stroke="#62bb5e" stroke-opacity="0.22"/>
<rect x="640.7" y="207.9" width="6.1" height="6.6" rx="1" fill="none" stroke="#62bb5e" stroke-opacity="0.24"/>
<rect x="770.6" y="346.2" width="5.2" height="8.0" rx="1" fill="none" stroke="#62bb5e" stroke-opacity="0.25"/>
<rect x="649.8" y="349.1" width="9.7" height="6.5" rx="1" fill="none" stroke="#948a3a" stroke-opacity="0.21"/>
<rect x="726.0" y="8.3" width="9.8" height="4.6" rx="1" fill="none" stroke="#62bb5e" stroke-opacity="0.12"/>
<rect x="680.1" y="326.9" width="3.2" height="3.7" rx="1" fill="none" stroke="#948a3a" stroke-opacity="0.14"/>
<rect x="642.8" y="239.8" width="7.0" height="6.7" rx="1" fill="none" stroke="#948a3a" stroke-opacity="0.12"/>
<rect x="779.1" y="286.8" width="3.3" height="3.9" rx="1" fill="none" stroke="#62bb5e" stroke-opacity="0.20"/>
<rect x="684.7" y="48.8" width="5.8" height="4.0" rx="1" fill="none" stroke="#948a3a" stroke-opacity="0.27"/>
<rect x="663.6" y="229.1" width="8.2" height="4.2" rx="1" fill="none" stroke="#948a3a" stroke-opacity="0.29"/>
<rect x="702.2" y="168.2" width="8.9" height="6.7" rx="1" fill="none" stroke="#62bb5e" stroke-opacity="0.29"/>
<rect x="764.3" y="135.4" width="4.7" height="5.3" rx="1" fill="none" stroke="#62bb5e" stroke-opacity="0.30"/>
<rect x="768.7" y="365.1" width="8.7" height="8.9" rx="1" fill="none" stroke="#62bb5e" stroke-opacity="0.20"/>
<path d="M636.0 392.4L649.7 392.4" stroke="#62bb5e" stroke-opacity="0.11" stroke-width="1"/>
<path d="M579.6 222.9L587.0 222.9" stroke="#62bb5e" stroke-opacity="0.1" stroke-width="1"/>
<path d="M547.0 58.6L547.0 97.5" stroke="#62bb5e" stroke-opacity="0.14" stroke-width="1"/>
<path d="M605.2 339.9L605.2 375.8" stroke="#62bb5e" stroke-opacity="0.05" stroke-width="1"/>
<path d="M605.9 111.6L634.7 111.6" stroke="#62bb5e" stroke-opacity="0.1" stroke-width="1"/>
<path d="M632.8 260.9L632.8 274.7" stroke="#62bb5e" stroke-opacity="0.09" stroke-width="1"/>
<path d="M635.3 120.8L635.3 136.4" stroke="#62bb5e" stroke-opacity="0.06" stroke-width="1"/>
<path d="M601.5 401.6L624.4 401.6" stroke="#62bb5e" stroke-opacity="0.1" stroke-width="1"/>
<path d="M595.7 62.3L605.1 62.3" stroke="#62bb5e" stroke-opacity="0.08" stroke-width="1"/>
<path d="M583.6 121.1L597.1 121.1" stroke="#62bb5e" stroke-opacity="0.1" stroke-width="1"/>
<path d="M624.8 256.2L624.8 281.1" stroke="#62bb5e" stroke-opacity="0.07" stroke-width="1"/>
<path d="M612.5 193.6L612.5 217.8" stroke="#62bb5e" stroke-opacity="0.1" stroke-width="1"/>
<path d="M574.5 101.7L574.5 114.5" stroke="#62bb5e" stroke-opacity="0.09" stroke-width="1"/>
<path d="M600.6 5.0L600.6 22.3" stroke="#62bb5e" stroke-opacity="0.07" stroke-width="1"/>
<path d="M597.9 206.4L597.9 221.4" stroke="#62bb5e" stroke-opacity="0.08" stroke-width="1"/>
<path d="M618.4 66.6L618.4 73.9" stroke="#62bb5e" stroke-opacity="0.09" stroke-width="1"/>
<path d="M550.9 162.9L550.9 183.3" stroke="#62bb5e" stroke-opacity="0.06" stroke-width="1"/>
<path d="M566.4 402.9L597.2 402.9" stroke="#62bb5e" stroke-opacity="0.08" stroke-width="1"/>
<path d="M578.5 283.6L578.5 310.2" stroke="#62bb5e" stroke-opacity="0.13" stroke-width="1"/>
<path d="M594.2 310.3L594.2 341.3" stroke="#62bb5e" stroke-opacity="0.1" stroke-width="1"/>
<path d="M619.6 297.6L656.6 297.6" stroke="#62bb5e" stroke-opacity="0.14" stroke-width="1"/>
<path d="M545.4 321.6L570.9 321.6" stroke="#62bb5e" stroke-opacity="0.15" stroke-width="1"/>
<path d="M599.3 175.5L599.3 208.0" stroke="#62bb5e" stroke-opacity="0.11" stroke-width="1"/>
<path d="M581.1 190.0L581.1 211.0" stroke="#62bb5e" stroke-opacity="0.08" stroke-width="1"/>
<path d="M582.1 233.2L600.6 233.2" stroke="#62bb5e" stroke-opacity="0.13" stroke-width="1"/>
<path d="M625.7 209.8L646.2 209.8" stroke="#62bb5e" stroke-opacity="0.08" stroke-width="1"/>
<path d="M558.8 241.7L584.1 241.7" stroke="#62bb5e" stroke-opacity="0.14" stroke-width="1"/>
<path d="M575.8 354.2L575.8 388.6" stroke="#62bb5e" stroke-opacity="0.07" stroke-width="1"/>
<path d="M585.5 382.4L590.9 382.4" stroke="#62bb5e" stroke-opacity="0.11" stroke-width="1"/>
<path d="M592.2 386.5L592.2 418.6" stroke="#62bb5e" stroke-opacity="0.15" stroke-width="1"/>
<path d="M594.2 217.3L623.1 217.3" stroke="#62bb5e" stroke-opacity="0.09" stroke-width="1"/>
<path d="M601.5 147.5L601.5 185.6" stroke="#62bb5e" stroke-opacity="0.1" stroke-width="1"/>
<path d="M554.4 157.3L554.4 176.3" stroke="#62bb5e" stroke-opacity="0.11" stroke-width="1"/>
<path d="M628.6 405.1L650.6 405.1" stroke="#62bb5e" stroke-opacity="0.11" stroke-width="1"/>
<path d="M639.6 144.2L639.6 167.7" stroke="#62bb5e" stroke-opacity="0.07" stroke-width="1"/>
<path d="M575.2 410.9L575.2 444.9" stroke="#62bb5e" stroke-opacity="0.06" stroke-width="1"/>
<path d="M630.0 289.8L630.0 323.5" stroke="#62bb5e" stroke-opacity="0.14" stroke-width="1"/>
<path d="M585.0 65.7L585.0 80.8" stroke="#62bb5e" stroke-opacity="0.1" stroke-width="1"/>
<path d="M562.9 76.6L562.9 103.7" stroke="#62bb5e" stroke-opacity="0.09" stroke-width="1"/>
<path d="M639.4 267.3L645.9 267.3" stroke="#62bb5e" stroke-opacity="0.13" stroke-width="1"/>
<path d="M574.1 290.1L579.3 290.1" stroke="#62bb5e" stroke-opacity="0.13" stroke-width="1"/>
<path d="M600.7 280.6L612.6 280.6" stroke="#62bb5e" stroke-opacity="0.11" stroke-width="1"/>
<path d="M570.3 271.7L570.3 295.3" stroke="#62bb5e" stroke-opacity="0.11" stroke-width="1"/>
<path d="M584.1 51.0L584.1 61.5" stroke="#62bb5e" stroke-opacity="0.06" stroke-width="1"/>
<path d="M554.5 71.6L554.5 94.9" stroke="#62bb5e" stroke-opacity="0.11" stroke-width="1"/>
<path d="M621.6 26.1L621.6 31.5" stroke="#62bb5e" stroke-opacity="0.08" stroke-width="1"/>
<path d="M613.0 148.6L623.9 148.6" stroke="#62bb5e" stroke-opacity="0.06" stroke-width="1"/>
<path d="M630.9 244.5L648.1 244.5" stroke="#62bb5e" stroke-opacity="0.09" stroke-width="1"/>
<path d="M550.2 374.0L550.2 399.4" stroke="#62bb5e" stroke-opacity="0.09" stroke-width="1"/>
<path d="M603.9 104.7L603.9 111.3" stroke="#62bb5e" stroke-opacity="0.14" stroke-width="1"/>
<path d="M574.9 377.5L608.5 377.5" stroke="#62bb5e" stroke-opacity="0.11" stroke-width="1"/>
<path d="M636.2 208.1L674.4 208.1" stroke="#62bb5e" stroke-opacity="0.09" stroke-width="1"/>
<path d="M613.3 93.0L613.3 108.8" stroke="#62bb5e" stroke-opacity="0.1" stroke-width="1"/>
<path d="M620.3 102.2L631.4 102.2" stroke="#62bb5e" stroke-opacity="0.07" stroke-width="1"/>
<path d="M637.3 122.1L662.0 122.1" stroke="#62bb5e" stroke-opacity="0.1" stroke-width="1"/>
<path d="M581.6 169.3L588.9 169.3" stroke="#62bb5e" stroke-opacity="0.13" stroke-width="1"/>
<path d="M578.4 102.9L590.1 102.9" stroke="#62bb5e" stroke-opacity="0.07" stroke-width="1"/>
<path d="M548.3 279.0L565.3 279.0" stroke="#62bb5e" stroke-opacity="0.12" stroke-width="1"/>
<path d="M553.8 113.3L588.0 113.3" stroke="#62bb5e" stroke-opacity="0.09" stroke-width="1"/>
<path d="M624.4 338.1L635.0 338.1" stroke="#62bb5e" stroke-opacity="0.12" stroke-width="1"/>
<path d="M580.8 402.5L580.8 414.8" stroke="#62bb5e" stroke-opacity="0.1" stroke-width="1"/>
<path d="M566.6 190.1L566.6 199.7" stroke="#62bb5e" stroke-opacity="0.08" stroke-width="1"/>
<path d="M630.5 246.8L648.3 246.8" stroke="#62bb5e" stroke-opacity="0.11" stroke-width="1"/>
<path d="M565.2 366.4L565.2 375.7" stroke="#62bb5e" stroke-opacity="0.1" stroke-width="1"/>
<path d="M570.7 324.1L570.7 342.6" stroke="#62bb5e" stroke-opacity="0.11" stroke-width="1"/>
<path d="M574.5 163.8L582.5 163.8" stroke="#62bb5e" stroke-opacity="0.14" stroke-width="1"/>
<path d="M575.5 278.4L575.5 287.2" stroke="#62bb5e" stroke-opacity="0.09" stroke-width="1"/>
<path d="M592.5 124.7L599.8 124.7" stroke="#62bb5e" stroke-opacity="0.07" stroke-width="1"/>
<path d="M557.0 301.0L571.9 301.0" stroke="#62bb5e" stroke-opacity="0.14" stroke-width="1"/>
<path d="M618.6 370.8L653.8 370.8" stroke="#62bb5e" stroke-opacity="0.08" stroke-width="1"/>
<path d="M547.8 285.4L576.0 285.4" stroke="#62bb5e" stroke-opacity="0.09" stroke-width="1"/>
<path d="M607.6 293.7L607.6 307.4" stroke="#62bb5e" stroke-opacity="0.09" stroke-width="1"/>
<path d="M604.7 76.3L604.7 85.3" stroke="#62bb5e" stroke-opacity="0.12" stroke-width="1"/>
<path d="M612.7 17.0L619.1 17.0" stroke="#62bb5e" stroke-opacity="0.07" stroke-width="1"/>
<path d="M573.8 159.9L580.2 159.9" stroke="#62bb5e" stroke-opacity="0.11" stroke-width="1"/>
<path d="M562.1 352.6L562.1 377.5" stroke="#62bb5e" stroke-opacity="0.08" stroke-width="1"/>
<path d="M586.3 287.4L603.5 287.4" stroke="#62bb5e" stroke-opacity="0.13" stroke-width="1"/>
<path d="M618.8 120.3L618.8 126.8" stroke="#62bb5e" stroke-opacity="0.11" stroke-width="1"/>
<path d="M549.5 102.7L549.5 111.6" stroke="#62bb5e" stroke-opacity="0.07" stroke-width="1"/>
<path d="M631.9 314.8L631.9 322.8" stroke="#62bb5e" stroke-opacity="0.09" stroke-width="1"/>
<path d="M616.0 348.1L630.9 348.1" stroke="#62bb5e" stroke-opacity="0.14" stroke-width="1"/>
<path d="M585.3 390.7L585.3 419.9" stroke="#62bb5e" stroke-opacity="0.13" stroke-width="1"/>
<path d="M604.7 190.2L604.7 197.1" stroke="#62bb5e" stroke-opacity="0.09" stroke-width="1"/>
<path d="M593.6 389.8L593.6 399.3" stroke="#62bb5e" stroke-opacity="0.05" stroke-width="1"/>
<path d="M611.8 338.4L611.8 352.5" stroke="#62bb5e" stroke-opacity="0.15" stroke-width="1"/>
<path d="M605.6 228.5L619.3 228.5" stroke="#62bb5e" stroke-opacity="0.09" stroke-width="1"/>
<path d="M584.1 84.6L600.0 84.6" stroke="#62bb5e" stroke-opacity="0.12" stroke-width="1"/>
<path d="M608.7 99.9L608.7 113.4" stroke="#62bb5e" stroke-opacity="0.09" stroke-width="1"/>
<path d="M633.9 147.6L633.9 163.1" stroke="#62bb5e" stroke-opacity="0.06" stroke-width="1"/>
<path d="M598.5 140.1L598.5 173.6" stroke="#62bb5e" stroke-opacity="0.13" stroke-width="1"/>
<path d="M651.3 52.7A237 237 0 0 1 774.7 295.0" fill="none" stroke="#62bb5e" stroke-opacity="0.42" stroke-width="1.3"/>
<circle cx="714" cy="195" r="31" fill="none" stroke="#62bb5e" stroke-opacity=".5" stroke-width="1.4"/>
<path d="M735.0 253.0A45 45 0 0 1 645.0 253.0" fill="none" stroke="#62bb5e" stroke-opacity="0.3" stroke-width="1"/>
<path d="M634.0 290.0A36 36 0 0 1 706.0 290.0" fill="none" stroke="#62bb5e" stroke-opacity="0.25" stroke-width="1"/>
<circle cx="697" cy="310" r="3" fill="none" stroke="#62bb5e" stroke-opacity=".3"/>
<circle cx="697" cy="310" r="6" fill="none" stroke="#62bb5e" stroke-opacity=".3"/>
<circle cx="697" cy="310" r="9" fill="none" stroke="#62bb5e" stroke-opacity=".3"/>
<circle cx="697" cy="310" r="12" fill="none" stroke="#62bb5e" stroke-opacity=".3"/>
<path d="M800.0 480.0A330 330 0 0 1 596.8 410.0" fill="none" stroke="#948a3a" stroke-opacity="0.14" stroke-width="1"/>
<path d="M800.0 495.0A345 345 0 0 1 587.6 421.9" fill="none" stroke="#948a3a" stroke-opacity="0.2" stroke-width="1"/>
<path d="M800.0 510.0A360 360 0 0 1 578.4 433.7" fill="none" stroke="#948a3a" stroke-opacity="0.14" stroke-width="1"/>
<path d="M800.0 525.0A375 375 0 0 1 569.1 445.5" fill="none" stroke="#948a3a" stroke-opacity="0.1" stroke-width="1"/>
<path d="M544 0L544 520" stroke="#62bb5e" stroke-opacity="0.08" stroke-width="1"/>
<path d="M556 0L556 520" stroke="#62bb5e" stroke-opacity="0.08" stroke-width="1"/>
<path d="M572 0L572 520" stroke="#62bb5e" stroke-opacity="0.08" stroke-width="1"/>
<path d="M590 0L590 520" stroke="#62bb5e" stroke-opacity="0.08" stroke-width="1"/>
<path d="M604 0L604 520" stroke="#62bb5e" stroke-opacity="0.08" stroke-width="1"/>
<path d="M615 0L615 520" stroke="#62bb5e" stroke-opacity="0.08" stroke-width="1"/>
<path d="M648 0L648 520" stroke="#62bb5e" stroke-opacity="0.08" stroke-width="1"/>
<path d="M690 0L690 520" stroke="#62bb5e" stroke-opacity="0.08" stroke-width="1"/>
<path d="M710 0L710 520" stroke="#62bb5e" stroke-opacity="0.08" stroke-width="1"/>
<path d="M730 0L730 520" stroke="#62bb5e" stroke-opacity="0.08" stroke-width="1"/>
<path d="M750 0L750 520" stroke="#62bb5e" stroke-opacity="0.08" stroke-width="1"/>
<path d="M780 0L780 520" stroke="#62bb5e" stroke-opacity="0.08" stroke-width="1"/>
<path d="M795 0L795 520" stroke="#62bb5e" stroke-opacity="0.08" stroke-width="1"/>
<path d="M540 18L800 18" stroke="#62bb5e" stroke-opacity="0.07" stroke-width="1"/>
<path d="M540 40L800 40" stroke="#62bb5e" stroke-opacity="0.07" stroke-width="1"/>
<path d="M540 82L800 82" stroke="#62bb5e" stroke-opacity="0.07" stroke-width="1"/>
<path d="M540 110L800 110" stroke="#62bb5e" stroke-opacity="0.07" stroke-width="1"/>
<path d="M540 140L800 140" stroke="#62bb5e" stroke-opacity="0.07" stroke-width="1"/>
<path d="M540 165L800 165" stroke="#62bb5e" stroke-opacity="0.07" stroke-width="1"/>
<path d="M540 205L800 205" stroke="#62bb5e" stroke-opacity="0.07" stroke-width="1"/>
<path d="M540 232L800 232" stroke="#62bb5e" stroke-opacity="0.07" stroke-width="1"/>
<path d="M540 270L800 270" stroke="#62bb5e" stroke-opacity="0.07" stroke-width="1"/>
<path d="M540 310L800 310" stroke="#62bb5e" stroke-opacity="0.07" stroke-width="1"/>
<path d="M540 340L800 340" stroke="#62bb5e" stroke-opacity="0.07" stroke-width="1"/>
<path d="M540 370L800 370" stroke="#62bb5e" stroke-opacity="0.07" stroke-width="1"/>
<path d="M540 392L800 392" stroke="#62bb5e" stroke-opacity="0.07" stroke-width="1"/>
<path d="M540 440L800 440" stroke="#62bb5e" stroke-opacity="0.05" stroke-width="1"/>
<path d="M540 470L800 470" stroke="#62bb5e" stroke-opacity="0.05" stroke-width="1"/>
<path d="M540 495L800 495" stroke="#62bb5e" stroke-opacity="0.05" stroke-width="1"/>
<path d="M702 0L702 90" stroke="#62bb5e" stroke-opacity="0.6" stroke-width="1.6"/>
<path d="M702 90L702 230" stroke="#62bb5e" stroke-opacity="0.3" stroke-width="1"/>
<path d="M658 0L658 185" stroke="#948a3a" stroke-opacity="0.45" stroke-width="1.1"/>
<path d="M764 0L764 130" stroke="#948a3a" stroke-opacity="0.35" stroke-width="1"/>
<path d="M741 120L741 250" stroke="#948a3a" stroke-opacity="0.45" stroke-width="1.1"/>
<path d="M764 180L764 520" stroke="#948a3a" stroke-opacity="0.3" stroke-width="1"/>
<path d="M627 253L627 330" stroke="#62bb5e" stroke-opacity="0.55" stroke-width="1.4"/>
<path d="M670 253L670 327" stroke="#62bb5e" stroke-opacity="0.35" stroke-width="1"/>
<path d="M720 253L720 330" stroke="#62bb5e" stroke-opacity="0.55" stroke-width="1.4"/>
<path d="M790 180L790 410" stroke="#62bb5e" stroke-opacity="0.3" stroke-width="1"/>
<path d="M572 100L572 520" stroke="#62bb5e" stroke-opacity="0.14" stroke-width="1"/>
<path d="M636 0L636 520" stroke="#62bb5e" stroke-opacity="0.2" stroke-width="1"/>
<path d="M699 330L699 520" stroke="#948a3a" stroke-opacity="0.2" stroke-width="1"/>
<path d="M544 0L544 520" stroke="#62bb5e" stroke-opacity="0.15" stroke-width="1"/>
<path d="M600 250L600 420" stroke="#62bb5e" stroke-opacity="0.12" stroke-width="1"/>
<path d="M680 330L680 410" stroke="#948a3a" stroke-opacity="0.3" stroke-width="1"/>
<path d="M658 6L800 6" stroke="#948a3a" stroke-opacity="0.4" stroke-width="1.1"/>
<path d="M658 66L764 66" stroke="#948a3a" stroke-opacity="0.45" stroke-width="1.1"/>
<path d="M658 130L740 130" stroke="#948a3a" stroke-opacity="0.45" stroke-width="1.1"/>
<path d="M658 152L702 152" stroke="#948a3a" stroke-opacity="0.35" stroke-width="1"/>
<path d="M702 180L800 180" stroke="#948a3a" stroke-opacity="0.4" stroke-width="1.1"/>
<path d="M627 253L800 253" stroke="#62bb5e" stroke-opacity="0.5" stroke-width="1.4"/>
<path d="M627 294L800 294" stroke="#948a3a" stroke-opacity="0.45" stroke-width="1.3"/>
<path d="M627 328L720 328" stroke="#62bb5e" stroke-opacity="0.55" stroke-width="1.4"/>
<path d="M627 352L800 352" stroke="#62bb5e" stroke-opacity="0.22" stroke-width="1"/>
<path d="M566 410L800 410" stroke="#948a3a" stroke-opacity="0.45" stroke-width="1.6"/>
<path d="M545 120L800 120" stroke="#62bb5e" stroke-opacity="0.12" stroke-width="1"/>
<path d="M545 222L800 222" stroke="#62bb5e" stroke-opacity="0.12" stroke-width="1"/>
<path d="M545 380L800 380" stroke="#62bb5e" stroke-opacity="0.14" stroke-width="1"/>
<path d="M545 460L800 460" stroke="#62bb5e" stroke-opacity="0.12" stroke-width="1"/>
<path d="M626 308L715 308" stroke="#62bb5e" stroke-opacity="0.3" stroke-width="1.1"/>
<path d="M626 318L800 318" stroke="#62bb5e" stroke-opacity="0.18" stroke-width="1.1"/>
<path d="M715 340L800 340" stroke="#62bb5e" stroke-opacity="0.3" stroke-width="1.1"/>
<path d="M626 372L800 372" stroke="#62bb5e" stroke-opacity="0.25" stroke-width="1.1"/>
<path d="M590 389L800 389" stroke="#62bb5e" stroke-opacity="0.22" stroke-width="1.1"/>
<path d="M629 290L629 413" stroke="#62bb5e" stroke-opacity="0.3" stroke-width="1.1"/>
<path d="M636 250L636 413" stroke="#62bb5e" stroke-opacity="0.2" stroke-width="1.1"/>
<path d="M700 255L700 413" stroke="#62bb5e" stroke-opacity="0.3" stroke-width="1.1"/>
<path d="M715 290L715 413" stroke="#62bb5e" stroke-opacity="0.3" stroke-width="1.1"/>
<path d="M758 255L758 413" stroke="#62bb5e" stroke-opacity="0.3" stroke-width="1.1"/>
<path d="M789 255L789 413" stroke="#62bb5e" stroke-opacity="0.25" stroke-width="1.1"/>
<path d="M605 300L605 413" stroke="#62bb5e" stroke-opacity="0.12" stroke-width="1.1"/>
<rect x="631" y="-1" width="12" height="12" rx="2" fill="none" stroke="#948a3a" stroke-opacity=".45"/>
<rect x="631" y="59" width="12" height="12" rx="2" fill="none" stroke="#948a3a" stroke-opacity=".45"/>
<rect x="631" y="119" width="12" height="12" rx="2" fill="none" stroke="#948a3a" stroke-opacity=".45"/>
<rect x="631" y="181" width="12" height="12" rx="2" fill="none" stroke="#948a3a" stroke-opacity=".45"/>
<rect x="631" y="244" width="12" height="12" rx="2" fill="none" stroke="#948a3a" stroke-opacity=".45"/>
<rect x="631" y="314" width="12" height="12" rx="2" fill="none" stroke="#948a3a" stroke-opacity=".45"/>
<rect x="572" y="407" width="25" height="6" rx="3" fill="none" stroke="#948a3a" stroke-opacity=".55"/>
<rect x="636" y="195" width="24" height="16" fill="#62bb5e" fill-opacity=".07"/>
<circle cx="548" cy="58" r="4" fill="none" stroke="#62bb5e" stroke-opacity=".12"/>
<circle cx="548" cy="120" r="4" fill="none" stroke="#62bb5e" stroke-opacity=".12"/>
<circle cx="548" cy="190" r="4" fill="none" stroke="#62bb5e" stroke-opacity=".12"/>
<circle cx="548" cy="250" r="4" fill="none" stroke="#62bb5e" stroke-opacity=".12"/>
<circle cx="548" cy="310" r="4" fill="none" stroke="#62bb5e" stroke-opacity=".12"/>
<circle cx="548" cy="410" r="4" fill="none" stroke="#62bb5e" stroke-opacity=".12"/>
<circle cx="548" cy="465" r="4" fill="none" stroke="#62bb5e" stroke-opacity=".12"/>
<circle cx="548" cy="488" r="4" fill="none" stroke="#62bb5e" stroke-opacity=".12"/>
<path d="M596 79L602 72L608 79" fill="none" stroke="#948a3a" stroke-opacity=".5" stroke-width="1.5"/>
<path d="M596 253L602 246L608 253" fill="none" stroke="#948a3a" stroke-opacity=".5" stroke-width="1.5"/>
<path d="M596 318L602 311L608 318" fill="none" stroke="#948a3a" stroke-opacity=".5" stroke-width="1.5"/>
<path d="M578 203L603 216L578 229L553 216Z" fill="none" stroke="#62bb5e" stroke-opacity=".12"/>
<path d="M795 274L785 282L795 290" fill="none" stroke="#948a3a" stroke-opacity=".5" stroke-width="1.5"/>
<rect x="732" y="262" width="6" height="6" rx="2" fill="none" stroke="#948a3a" stroke-opacity=".35"/>
<rect x="742" y="262" width="6" height="6" rx="2" fill="none" stroke="#948a3a" stroke-opacity=".35"/>
<rect x="752" y="262" width="6" height="6" rx="2" fill="none" stroke="#948a3a" stroke-opacity=".35"/>
<rect x="732" y="282" width="6" height="6" rx="2" fill="none" stroke="#948a3a" stroke-opacity=".35"/>
<rect x="742" y="282" width="6" height="6" rx="2" fill="none" stroke="#948a3a" stroke-opacity=".35"/>
<rect x="752" y="282" width="6" height="6" rx="2" fill="none" stroke="#948a3a" stroke-opacity=".35"/>
<rect x="677" y="37" width="6" height="6" rx="2" fill="none" stroke="#948a3a" stroke-opacity=".35"/>
<rect x="677" y="67" width="6" height="6" rx="2" fill="none" stroke="#948a3a" stroke-opacity=".35"/>
<rect x="677" y="92" width="6" height="6" rx="2" fill="none" stroke="#948a3a" stroke-opacity=".35"/>
<rect x="677" y="117" width="6" height="6" rx="2" fill="none" stroke="#948a3a" stroke-opacity=".35"/>
  </g>
</svg>

<!-- desktop icons -->
<svg style="left:29px;top:9px" width="42" height="37" viewBox="0 0 42 37">
  <defs><linearGradient id="fg" x1="0" y1="0" x2="0" y2="1"><stop offset="0" stop-color="#6ec3f1"/><stop offset="1" stop-color="#4aaae8"/></linearGradient></defs>
  <path d="M1 0.7H18.7L21.3 3.2H40.7V30H1Z" fill="#1f87c9"/>
  <path d="M0 10H14.2L18.6 7.3H41.3V36.8H0Z" fill="url(#fg)"/>
  <g fill="none" stroke="#2d86bf" stroke-width="1.2"><path d="M15 22L21 16.3L27 22M16.7 20.5V28.5H25.3V20.5M19.8 28.5V24.5H22.2V28.5M24.5 18V16"/></g>
</svg>
<svg style="left:129px;top:9px" width="42" height="37" viewBox="0 0 42 37">
  <path d="M1 0.7H18.7L21.3 3.2H40.7V30H1Z" fill="#1f87c9"/>
  <path d="M0 10H14.2L18.6 7.3H41.3V36.8H0Z" fill="url(#fg)"/>
  <g fill="none" stroke="#2d86bf" stroke-width="1.2"><path d="M14.5 16.6H27.5M16.2 16.6V29.3H25.8V16.6M18.8 16.6V15H23.2V16.6M19.6 19.5V26.5M22.4 19.5V26.5"/></g>
</svg>
<div class="dlabel" style="left:9.5px;top:56px">Home</div>
<div class="dlabel" style="left:109.5px;top:56px">Trash</div>

<!-- desktop toolbox -->
<div style="position:absolute;left:779px;top:0;width:21px;height:21px;background:rgba(200,210,214,.55)"></div>
<div style="position:absolute;left:785px;top:7px;width:9px;height:1px;background:#3a3a3a;box-shadow:0 3px 0 #3a3a3a,0 6px 0 #3a3a3a"></div>

<div id="menu">
  <!-- avatar -->
  <svg style="left:28px;top:21px" width="30" height="30" viewBox="0 0 30 30">
    <g fill="none" stroke="#232629" stroke-width="1.5">
      <circle cx="14.25" cy="8" r="5.6"/>
      <path d="M2.6 27.2A11.7 11.7 0 0 1 25.9 27.2"/>
    </g>
  </svg>
  <div class="t" style="left:66.5px;top:21px;font-size:11.5px;color:#232629">J. Sharp</div>
  <div class="t" style="left:67.5px;top:47.5px;font-size:9.3px;color:#7b7e82">Type to search...</div>

  <!-- list -->
  <div class="t title" style="left:67.5px;top:72.00px">Web Browser</div>
  <div class="t sub" style="left:67.5px;top:84.90px">Firefox</div>
  <div class="t title" style="left:67.5px;top:101.53px">Personal Information Manager</div>
  <div class="t sub" style="left:67.5px;top:114.43px">Kontact</div>
  <div class="t title" style="left:67.5px;top:131.06px">Word Processor</div>
  <div class="t sub" style="left:67.5px;top:143.96px">LibreOffice Writer</div>
  <div class="t title" style="left:67.5px;top:160.59px">Photo Management Program</div>
  <div class="t sub" style="left:67.5px;top:173.49px">digiKam</div>
  <div class="t title" style="left:67.5px;top:190.12px">File Manager</div>
  <div class="t sub" style="left:67.5px;top:203.02px">Dolphin</div>
  <div class="t title" style="left:67.5px;top:219.65px">Configure Desktop</div>
  <div class="t sub" style="left:67.5px;top:232.55px">Configure Desktop</div>
  <div class="t title" style="left:67.5px;top:249.18px">Help Center</div>
  <div class="t sub" style="left:67.5px;top:262.08px">Help</div>
  <div class="t title" style="left:67.5px;top:278.71px">Terminal</div>
  <div class="t sub" style="left:67.5px;top:291.61px">Konsole</div>

  <!-- icons -->
  <!-- firefox -->
  <svg style="left:33px;top:70.5px" width="22" height="22" viewBox="0 0 22 22">
    <defs>
      <linearGradient id="ffo" x1="1" y1="0" x2="0" y2="1">
        <stop offset="0" stop-color="#ffe23a"/><stop offset=".35" stop-color="#ffa12b"/><stop offset=".62" stop-color="#ff5a2e"/><stop offset="1" stop-color="#e8285a"/>
      </linearGradient>
      <linearGradient id="ffb" x1="0" y1="0" x2="0" y2="1">
        <stop offset="0" stop-color="#3c8cf3"/><stop offset=".6" stop-color="#2f62d8"/><stop offset="1" stop-color="#2b2aa3"/>
      </linearGradient>
      <linearGradient id="ffy" x1="0" y1="0" x2="0" y2="1">
        <stop offset="0" stop-color="#fff13c"/><stop offset=".6" stop-color="#ffcf2e"/><stop offset="1" stop-color="#ff9f2a"/>
      </linearGradient>
      <linearGradient id="ffr" x1="0" y1="0" x2="1" y2="1">
        <stop offset="0" stop-color="#f22a3a"/><stop offset=".7" stop-color="#ff6a2b"/><stop offset="1" stop-color="#ff9a2a"/>
      </linearGradient>
    </defs>
    <path d="M3.2 2.7L5.5 4.6C7 3.2 9 2.2 11 2.2C12.5 2.2 13.8 2.6 14.9 3.4L14.6 0.6C18.6 2 21.1 6.5 21.1 11.5A10.5 10.5 0 0 1 0.1 11.5C0.1 8 1.4 4.9 3.2 2.7Z" fill="url(#ffo)"/>
    <path d="M10.6 22A10.5 10.5 0 0 1 0.5 9C1 6.5 2 4.5 3.3 3C3.5 4.5 4.3 5.5 5.3 6C4 8 3.5 10.5 4 13C5 17 8 19.5 12 19.5C15 19.5 18 17.5 19.5 15C20 17 19 19.5 17 20.5C15.5 21.5 13 22 10.6 22Z" fill="url(#ffr)" opacity=".85"/>
    <ellipse cx="10.6" cy="8.6" rx="6" ry="6.9" fill="url(#ffb)"/>
    <path d="M3.2 2.7C4 3.5 4.5 4.2 5.5 4.6C6.8 3.6 8.5 3.3 10 3.8C9.8 4.6 9.5 5.3 9.2 5.8C10.4 6.4 10.8 7.2 10.5 8C9.5 8.2 8.6 8.5 8.3 9.6C8.4 10.8 9.6 11.5 11 11.6C12.5 11.7 13.6 12.6 13.5 13.6C12.5 14.6 10.5 14.5 9 14C7 13.2 5.6 11.5 5.3 9.3C5.1 7.8 5.3 6.6 4 5.6C3.4 4.8 3.1 3.8 3.2 2.7Z" fill="#ff6f2a"/>
    <path d="M14.6 0.6C14.3 2.2 14.6 3.4 15.3 4.5C16.5 6.3 17 8.4 16.8 10.6C16.5 13.5 14.6 16.2 11.5 17.2C14.5 18 18 16.5 20 13.8C21.5 11.5 21.7 8.4 20.6 5.8C19.6 3.6 17.4 1.5 14.6 0.6Z" fill="url(#ffy)"/>
  </svg>
  <!-- kontact -->
  <svg style="left:34px;top:101px" width="20" height="21" viewBox="0 0 20 21">
    <path d="M1.2 4.8L9 3.1V8.6H1.2Z" fill="#f4a21f"/>
    <rect x="8.4" y="1.2" width="10.6" height="7.5" fill="#cfa35e"/>
    <path d="M8.4 1.2H19" stroke="#e6c48a" stroke-width=".9" stroke-dasharray="1 1"/>
    <circle cx="13.6" cy="4.9" r="1.3" fill="#f3e3c4"/>
    <rect x="0" y="8.2" width="19.3" height="11.8" fill="#f5f5f5"/>
    <g fill="none" stroke-width="1">
      <path d="M0.5 8.7H19M0.5 19.5H19M0.5 8.7V19.5M18.8 8.7V19.5" stroke="#e0605c" stroke-opacity=".85" stroke-dasharray="1.6 6"/>
      <path d="M0.5 8.7H19M0.5 19.5H19M0.5 8.7V19.5M18.8 8.7V19.5" stroke="#5b9be0" stroke-opacity=".85" stroke-dasharray="1.6 6" stroke-dashoffset="3.8"/>
    </g>
    <rect x="14.9" y="10.9" width="2" height="2.1" fill="#2eb38a"/>
    <path d="M3 12H6M8.5 14H12M8.5 16H12" stroke="#c8c8c8" stroke-width=".6"/>
  </svg>
  <!-- writer -->
  <svg style="left:35.5px;top:131px" width="16" height="20" viewBox="0 0 16 20">
    <path d="M0.5 0.6H9.8L15.6 6.4V19.5H0.5Z" fill="#1ba8f4"/>
    <path d="M11.6 0.6H15.6V4.6Z" fill="#1677b6"/>
    <g stroke="#62c2f6" stroke-width="1"><path d="M4.5 7.3H11M4.5 9.9H11M4.5 12.9H10.5"/></g>
  </svg>
  <!-- digikam -->
  <svg style="left:34px;top:161px" width="19" height="19" viewBox="0 0 19 19">
    <circle cx="9.5" cy="9.5" r="9.3" fill="#3d4246"/>
    <circle cx="9.5" cy="9.5" r="7.2" fill="#232629"/>
    <circle cx="9.5" cy="9.5" r="6.3" fill="#2190ea"/>
    <circle cx="9.5" cy="9.5" r="4" fill="none" stroke="#1a78cc" stroke-width=".6"/>
    <circle cx="9.5" cy="9.5" r="1.2" fill="#102a44"/>
    <circle cx="6.2" cy="6" r="1.3" fill="#a5d3f7"/>
  </svg>
  <!-- dolphin -->
  <svg style="left:33px;top:190px" width="22" height="21" viewBox="0 0 22 21">
    <defs><linearGradient id="dg" x1="0" y1="0" x2="1" y2="1"><stop offset="0" stop-color="#49a6ee"/><stop offset="1" stop-color="#2a7fd8"/></linearGradient></defs>
    <path d="M0 0.5H9.5L10.5 2H21V19.5H0Z" fill="#1b6aa9"/>
    <rect x="1" y="3.3" width="19.3" height="3.2" fill="#fbfbfb"/>
    <rect x="9" y="3.3" width="11.3" height="3.2" fill="#eef0f2"/>
    <path d="M0 7.2H8.5L9.3 6.6H21V19.5H0Z" fill="url(#dg)"/>
    <path d="M1.5 7.2L13.5 19.5H21V6.6Z" fill="#2378d0" opacity=".35"/>
    <rect x="0" y="18.7" width="21" height="0.9" fill="#1f6cc0"/>
  </svg>
  <!-- configure -->
  <svg style="left:34px;top:220px" width="19" height="19" viewBox="0 0 19 19">
    <rect x="0.2" y="0.3" width="18.8" height="18.7" fill="#2d3134"/>
    <path d="M2.5 7H13.5" stroke="#3daee9" stroke-width="1"/><path d="M13.5 7H17" stroke="#4d5256" stroke-width="1"/>
    <circle cx="13.2" cy="7" r="1.4" fill="#eff0f1"/>
    <path d="M2.5 12H7.5" stroke="#3daee9" stroke-width="1"/><path d="M7.5 12H17" stroke="#4d5256" stroke-width="1"/>
    <circle cx="7.4" cy="12" r="1.4" fill="#eff0f1"/>
  </svg>
  <!-- help -->
  <svg style="left:34.5px;top:250px" width="19" height="19" viewBox="0 0 19 19">
    <circle cx="9.3" cy="9.4" r="9.1" fill="#efefef"/>
    <path d="M0.20000000000000107 9.4A9.1 9.1 0 0 1 18.4 9.4" fill="none" stroke="#d8c8b0" stroke-width=".6" opacity=".6"/>
    <path d="M17.95 12.21A9.1 9.1 0 0 1 12.11 18.05L10.63 13.49A4.3 4.3 0 0 0 13.39 10.73Z" fill="#d8363f"/><path d="M6.49 18.05A9.1 9.1 0 0 1 0.65 12.21L5.21 10.73A4.3 4.3 0 0 0 7.97 13.49Z" fill="#d8363f"/><path d="M0.65 6.59A9.1 9.1 0 0 1 6.49 0.75L7.97 5.31A4.3 4.3 0 0 0 5.21 8.07Z" fill="#d8363f"/><path d="M12.11 0.75A9.1 9.1 0 0 1 17.95 6.59L13.39 8.07A4.3 4.3 0 0 0 10.63 5.31Z" fill="#d8363f"/>
    <circle cx="9.3" cy="9.4" r="4.3" fill="#dde0e2"/>
  </svg>
  <!-- konsole -->
  <svg style="left:34px;top:279px" width="20" height="20" viewBox="0 0 20 20">
    <defs><linearGradient id="kg" x1="0" y1="0" x2="0" y2="1"><stop offset="0" stop-color="#454b4f"/><stop offset="1" stop-color="#2b3033"/></linearGradient></defs>
    <rect x="0" y="0" width="20" height="20" fill="#f2f2f2" opacity=".7"/>
    <rect x="0.5" y="0.5" width="19" height="19" fill="url(#kg)"/>
    <path d="M7.2 6.6L10.9 10.3L7.2 14" fill="none" stroke="#a7acaf" stroke-width="1"/>
  </svg>

  <!-- tabs -->
  <div style="position:absolute;left:7px;top:372px;width:62px;height:2px;background:#3daee9"></div>
  <svg style="left:31px;top:384px" width="14" height="19" viewBox="0 0 14 19">
    <path d="M1.5 1.5H12.5V17.5L7 13.8L1.5 17.5Z" fill="none" stroke="#4a4d50" stroke-width="1.05" stroke-linejoin="round"/>
  </svg>
  <svg style="left:94px;top:384px" width="19" height="19" viewBox="0 0 19 19">
    <g fill="none" stroke="#4a4d50" stroke-width="1.05"><rect x="1.5" y="1.5" width="6.5" height="6.5" rx=".8"/><rect x="11" y="1.5" width="6.5" height="6.5" rx=".8"/><rect x="1.5" y="11" width="6.5" height="6.5" rx=".8"/><rect x="11" y="11" width="6.5" height="6.5" rx=".8"/></g>
  </svg>
  <svg style="left:159px;top:385px" width="21" height="18" viewBox="0 0 21 18">
    <rect x="1" y="0.8" width="19" height="13" rx=".5" fill="none" stroke="#4a4d50" stroke-width="1.1"/>
    <rect x="0.5" y="13.1" width="20" height="1.2" fill="#2e3134"/>
    <path d="M7.5 14.5V16.3M12.5 14.5V16.3" stroke="#4a4d50" stroke-width="1"/>
    <path d="M6 16.9H15" stroke="#3a3d40" stroke-width="1.1"/>
  </svg>
  <svg style="left:225.5px;top:384.5px" width="19" height="19" viewBox="0 0 19 19">
    <g fill="none" stroke="#4a4d50" stroke-width="1.15"><circle cx="9.5" cy="9.1" r="8.5"/><path d="M9.5 3.3V9.6H14.8"/></g>
  </svg>
  <svg style="left:291px;top:384.5px" width="19" height="19" viewBox="0 0 19 19">
    <g fill="none" stroke="#4a4d50" stroke-width="1.15"><circle cx="9.5" cy="9.1" r="8.5"/><path d="M11.3 4.6L6.8 9.1L11.3 13.6"/></g>
  </svg>
  <div class="t tab" style="left:5px;top:411.5px">Favorites</div>
  <div class="t tab" style="left:70.7px;top:411.5px">Applications</div>
  <div class="t tab" style="left:136.4px;top:411.5px">Computer</div>
  <div class="t tab" style="left:202px;top:411.5px">History</div>
  <div class="t tab" style="left:267.8px;top:411.5px">Leave</div>
</div>

<div id="tbshadow"></div>
<div id="taskbar">
  <div style="position:absolute;left:0;top:-1px;width:338px;height:1px;background:#d2d6d9"></div>
  <!-- opensuse logo -->
  <svg style="left:2px;top:1px" width="17" height="17" viewBox="0 0 17 17">
    <circle cx="8.5" cy="8.1" r="8.4" fill="#f4f5f6" opacity=".55"/>
    <circle cx="8.5" cy="8.1" r="7.6" fill="#1d1f21"/>
    <path d="M2.65 4.47L3.85 4.47A5.9 5.9 0 1 1 3.85 11.73L2.65 11.73" fill="none" stroke="#e4e6e7" stroke-width="1.3"/>
    <path d="M2.4 4.5H6.5C8.5 4.6 10.5 5.2 12 6.3C13.2 7.3 13.4 9 12.4 10.1C11.2 11.2 9 11.2 7.6 10.4H2.4Z" fill="#1d1f21"/>
    <circle cx="11.3" cy="7.9" r="1.5" fill="none" stroke="#c8cacc" stroke-width=".8"/>
    <path d="M7.2 9.6C8.5 10.8 10.8 11 12.6 10" fill="none" stroke="#b8babc" stroke-width=".7"/>
  </svg>
  <div style="position:absolute;left:23px;top:-0.5px;width:14px;height:9px;background:#7cc3ea"></div>
  <div style="position:absolute;left:23px;top:9.5px;width:14px;height:8.5px;background:#c4c9c9"></div>

  <!-- tray -->
  <svg style="left:607.5px;top:2.5px" width="14" height="14" viewBox="0 0 14 14">
    <circle cx="7" cy="7" r="6" fill="none" stroke="#4d4d4d" stroke-width="1"/>
    <path d="M5.8 5L7.3 4V10M5.8 10H8.6" fill="none" stroke="#4d4d4d" stroke-width="1"/>
  </svg>
  <div class="t" style="left:627px;top:4.5px;font-size:8.8px;font-weight:bold;letter-spacing:-.3px;color:#4253a3">EN</div>
  <svg style="left:645px;top:2px" width="14" height="14" viewBox="0 0 14 14">
    <path d="M11.5 4A5.5 5.5 0 1 0 12 9" fill="none" stroke="#232629" stroke-width="1.1"/>
    <path d="M7 3L10 6.5H8.2V10H5.8V6.5H4Z" fill="#232629"/>
    <circle cx="11" cy="11" r="2" fill="#3daee9"/>
  </svg>
  <svg style="left:663px;top:3px" width="13" height="13" viewBox="0 0 13 13">
    <g fill="none" stroke="#232629" stroke-width="1"><rect x="0.5" y="0.5" width="2.5" height="7.5"/><rect x="4" y="1.5" width="8.5" height="7.5"/></g>
    <path d="M5.5 11.5H11M8.2 9V11.5" stroke="#232629" stroke-width="1"/>
  </svg>
  <svg style="left:681px;top:3px" width="13" height="13" viewBox="0 0 13 13">
    <path d="M0.5 4H3L7 0.8V12.2L3 9H0.5Z" fill="#232629"/>
    <path d="M9 3.8A3.2 3.2 0 0 1 9 9.2" fill="none" stroke="#9a9c9e" stroke-width="1"/>
    <path d="M10.5 2A5.5 5.5 0 0 1 10.5 11" fill="none" stroke="#c4c6c8" stroke-width="1"/>
  </svg>
  <svg style="left:700px;top:5.5px" width="12" height="8" viewBox="0 0 12 8">
    <path d="M1.5 6.5L6 2L10.5 6.5Z" fill="#232629"/>
  </svg>
  <div class="t" style="left:716.5px;top:3px;font-size:14px;letter-spacing:.3px;color:#2f3337">11:58 PM</div>
  <div style="position:absolute;left:784.5px;top:5.5px;width:9px;height:1.2px;background:#4d4d4d;box-shadow:0 3px 0 #4d4d4d,0 6px 0 #4d4d4d"></div>
</div>
</body></html>
